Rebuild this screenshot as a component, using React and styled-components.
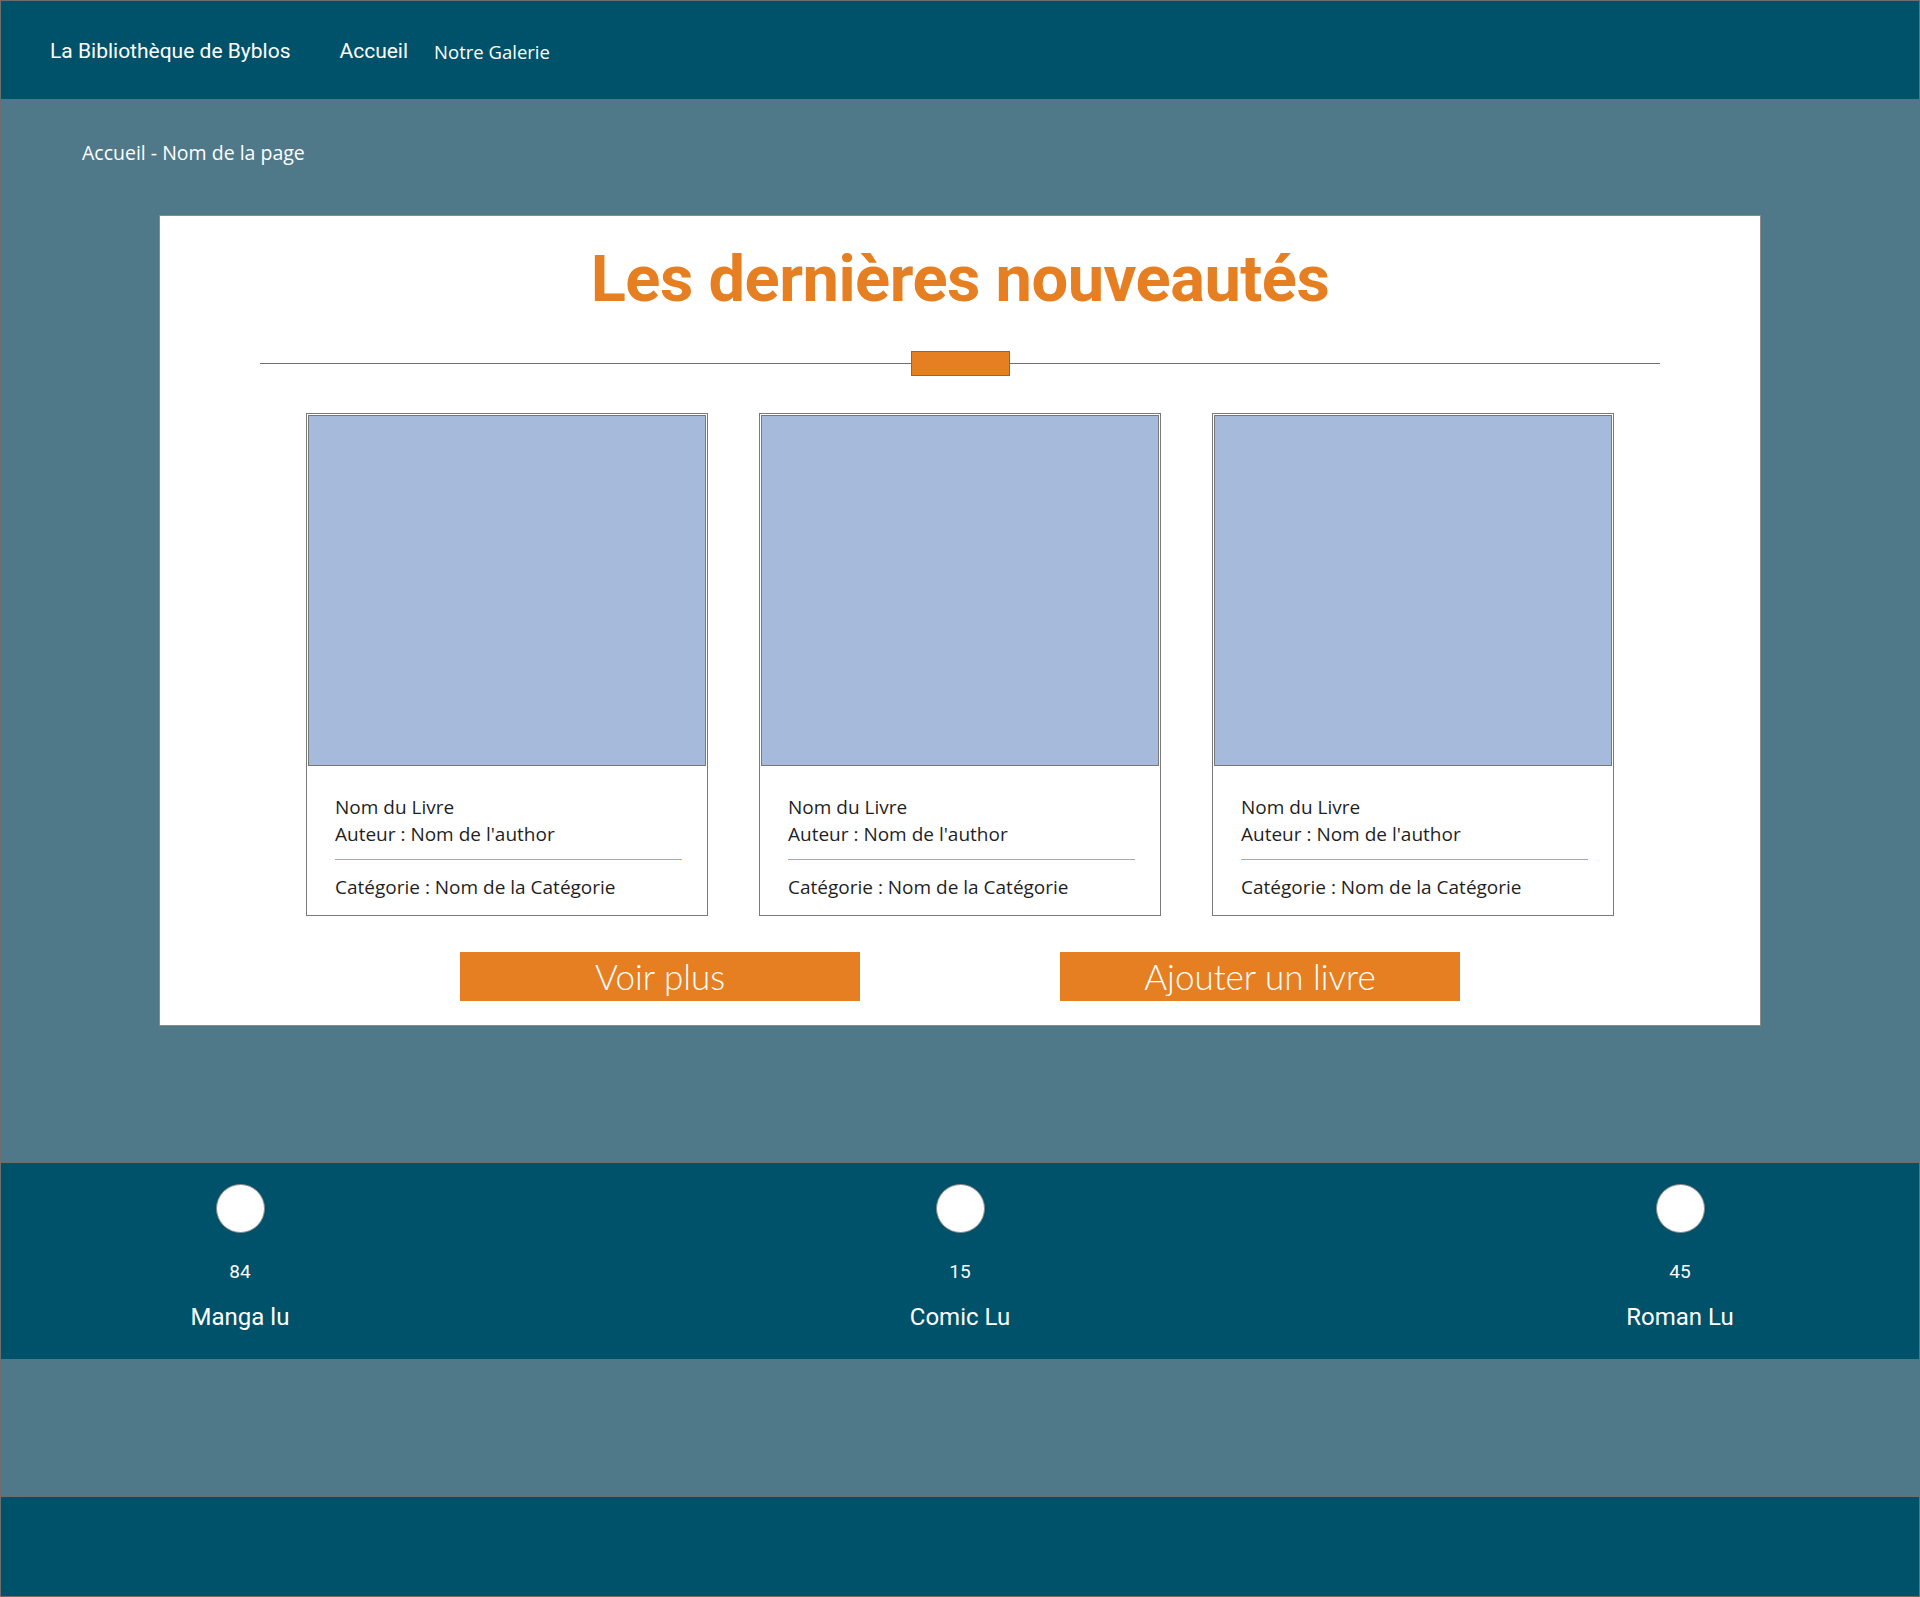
import React from "react";
import styled, { createGlobalStyle } from "styled-components";

const Global = createGlobalStyle`
  html, body { margin: 0; padding: 0; }
  body { background: #4f7988; }
  * { box-sizing: border-box; }
`;

const Page = styled.div`
  width: 1920px;
  min-height: 1597px;
  border: 1px solid #6e6e6e;
  background: #4f7988;
  display: flex;
  flex-direction: column;
`;

const Header = styled.header`
  height: 99px;
  background: #00526a;
  border-bottom: 1px solid #6e6e6e;
  display: flex;
  align-items: center;
  padding-left: 49px;
  padding-top: 1px;
  color: #fff;
`;

const Brand = styled.div`
  font-family: Roboto, "Liberation Sans", sans-serif;
  font-size: 21px;
  margin-right: 49px;
`;

const NavLink = styled.a`
  font-family: ${(p) => (p.$alt ? '"Open Sans", sans-serif' : 'Roboto, "Liberation Sans", sans-serif')};
  font-size: ${(p) => (p.$alt ? "18.5px" : "21px")};
  color: #fff;
  text-decoration: none;
  margin-right: 26px;
  margin-top: ${(p) => (p.$alt ? "2px" : "0")};
`;

const Main = styled.main`
  padding: 40px 0 136px;
`;

const Breadcrumb = styled.div`
  font-family: "Open Sans", sans-serif;
  font-size: 19.5px;
  line-height: 26px;
  color: #fff;
  padding-left: 81px;
  margin-bottom: 49px;
`;

const Card = styled.section`
  width: 1602px;
  margin: 0 auto;
  background: #fff;
  border: 1px solid #8a8a8a;
  padding: 24px 0 24px;
`;

const Title = styled.h1`
  margin: 0;
  text-align: center;
  font-family: Roboto, "Liberation Sans", sans-serif;
  font-weight: 700;
  font-size: 65px;
  line-height: 78px;
  color: #e67f22;
  letter-spacing: -0.5px;
`;

const Divider = styled.div`
  margin: 33px 100px 0;
  height: 25px;
  display: flex;
  align-items: center;
  &::before, &::after {
    content: "";
    flex: 1;
    height: 1px;
    background: #6e6e6e;
  }
`;

const DividerMark = styled.span`
  width: 99px;
  height: 25px;
  background: #e67f22;
  border: 1px solid #6e6e6e;
`;

const Books = styled.div`
  margin-top: 37px;
  display: flex;
  justify-content: center;
  gap: 51px;
`;

const Book = styled.article`
  width: 402px;
  border: 1px solid #7a7a7a;
  padding: 1px 1px 0;
  background: #fff;
`;

const Cover = styled.div`
  height: 351px;
  background: #a6badb;
  border: 1px solid #777;
`;

const BookBody = styled.div`
  padding: 28px 24px 14px 27px;
  font-family: "Open Sans", sans-serif;
  font-size: 19px;
  line-height: 27px;
  color: #1f1f1f;
`;

const Rule = styled.hr`
  border: 0;
  height: 1px;
  background: #ef9a4a;
  margin: 11px 0 14px;
`;

const Actions = styled.div`
  margin-top: 36px;
  display: flex;
  justify-content: center;
  gap: 200px;
`;

const Button = styled.button`
  width: 400px;
  height: 49px;
  border: 0;
  background: #e67f22;
  color: #fff;
  font-family: Lato, "Open Sans", sans-serif;
  font-weight: 300;
  font-size: 35px;
  line-height: 49px;
  padding: 0;
  cursor: pointer;
`;

const Stats = styled.section`
  background: #00526a;
  border-top: 1px solid #6e6e6e;
  height: 197px;
  padding: 21px 159px 0;
  display: flex;
  justify-content: space-between;
  align-items: flex-start;
`;

const Stat = styled.div`
  width: 160px;
  display: flex;
  flex-direction: column;
  align-items: center;
  color: #fff;
  font-family: Roboto, "Liberation Sans", sans-serif;
`;

const Dot = styled.div`
  width: 49px;
  height: 49px;
  border-radius: 50%;
  background: #fff;
  border: 1px solid #8a8a8a;
`;

const Count = styled.div`
  margin-top: 28px;
  font-size: 19px;
  line-height: 22px;
`;

const Label = styled.div`
  margin-top: 20px;
  font-size: 24px;
  line-height: 28px;
`;

const Spacer = styled.div`
  height: 137px;
`;

const Footer = styled.footer`
  flex: 1;
  background: #00526a;
  border-top: 1px solid #6e6e6e;
`;

const books = [1, 2, 3];
const stats = [
  { n: 84, label: "Manga lu" },
  { n: 15, label: "Comic Lu" },
  { n: 45, label: "Roman Lu" },
];

export default function App() {
  return (
    <>
      <Global />
      <Page>
        <Header>
          <Brand>La Bibliothèque de Byblos</Brand>
          <NavLink href="#">Accueil</NavLink>
          <NavLink href="#" $alt>Notre Galerie</NavLink>
        </Header>
        <Main>
          <Breadcrumb>Accueil - Nom de la page</Breadcrumb>
          <Card>
            <Title>Les dernières nouveautés</Title>
            <Divider>
              <DividerMark />
            </Divider>
            <Books>
              {books.map((b) => (
                <Book key={b}>
                  <Cover />
                  <BookBody>
                    <div>Nom du Livre</div>
                    <div>Auteur : Nom de l'author</div>
                    <Rule />
                    <div>Catégorie : Nom de la Catégorie</div>
                  </BookBody>
                </Book>
              ))}
            </Books>
            <Actions>
              <Button>Voir plus</Button>
              <Button>Ajouter un livre</Button>
            </Actions>
          </Card>
        </Main>
        <Stats>
          {stats.map((s) => (
            <Stat key={s.label}>
              <Dot />
              <Count>{s.n}</Count>
              <Label>{s.label}</Label>
            </Stat>
          ))}
        </Stats>
        <Spacer />
        <Footer />
      </Page>
    </>
  );
}
